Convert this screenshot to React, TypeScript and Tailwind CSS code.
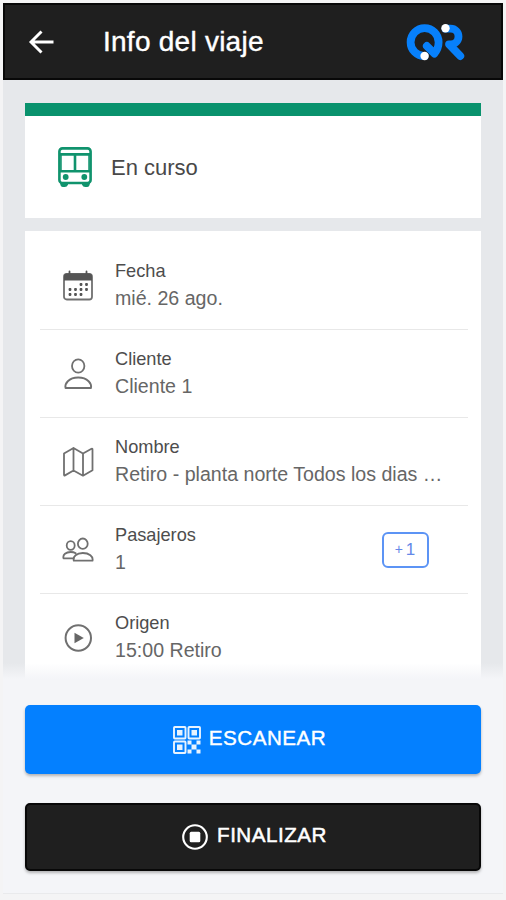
import type { ReactNode } from "react";

const line = {
  fill: "none",
  stroke: "#707070",
  strokeWidth: 1.8,
  strokeLinecap: "round",
  strokeLinejoin: "round",
} as const;

function BackIcon() {
  return (
    <svg className="h-6 w-7" viewBox="0 0 28 24" fill="none" stroke="#fff" strokeWidth="2.9">
      <path d="M14.5 1.5 4 12l10.5 10.5M4 12h22.5" />
    </svg>
  );
}

function Logo() {
  return (
    <svg
      className="h-10 w-[62px]"
      viewBox="0 0 62 40"
      fill="none"
      stroke="#0780fb"
      strokeWidth="7.8"
      strokeLinecap="round"
      strokeLinejoin="round"
    >
      <path d="M18.600 34.200A14 14 0 1 1 32.600 20.300C32.600 25 30.800 28.700 28.300 31.600L20.800 24" />
      <path d="M39.500 6.700h5.200a7.800 7.800 0 0 1 0 15.600H43L54.300 34" />
      <circle cx="18.600" cy="34" r="4.200" fill="#fff" stroke="none" />
      <circle cx="39.500" cy="6.200" r="4.200" fill="#fff" stroke="none" />
    </svg>
  );
}

function BusIcon() {
  return (
    <svg className="h-[40px] w-[34px]" viewBox="0 0 34 40" fill="none" stroke="#10936d" strokeWidth="2.6">
      <rect x="1.4" y="1.4" width="31.2" height="34.6" rx="3" />
      <path d="M1.4 7.4h31.2M17 7.4V24M1.4 24.3h31.2" />
      <path d="M3 6v19M31 6v19" strokeWidth="1.5" />
      <circle cx="7.7" cy="30" r="2.9" fill="#10936d" stroke="none" />
      <circle cx="26.3" cy="30" r="2.9" fill="#10936d" stroke="none" />
      <path d="M2 35h8v2.800q-1 2.200-3.200 2.200H5q-3 0-3-5zM24 35h8q0 5-3 5h-1.800q-2.200 0-3.200-2.200z" fill="#10936d" stroke="none" />
    </svg>
  );
}

const dots = [
  [19, 14.5], [24.5, 14.5],
  [8, 19.5], [13.5, 19.5], [19, 19.5], [24.5, 19.5],
  [8, 24.5], [13.5, 24.5], [19, 24.5],
];

function CalendarIcon() {
  return (
    <svg className="size-8" viewBox="0 0 32 32">
      <rect x="2" y="4" width="28" height="25.5" rx="2.8" {...line} />
      <path d="M2 10.5V6q0-2.5 3-2.5h22q3 0 3 2.5v4.5z" fill="#555" />
      <path d="M7.5 1.5v4M24.5 1.5v4" {...line} stroke="#555" />
      {dots.map(([x, y]) => (
        <rect key={`${x}-${y}`} x={x - 1.4} y={y - 1.4} width="2.8" height="2.8" rx=".8" fill="#555" />
      ))}
    </svg>
  );
}

function PersonIcon() {
  return (
    <svg className="size-8" viewBox="0 0 32 32" {...line}>
      <ellipse cx="16.2" cy="8" rx="6.200" ry="6.700" />
      <path d="M3.500 30C2.500 26 6.500 19.500 16.200 19.500S30 26 29 30Z" />
    </svg>
  );
}

function MapIcon() {
  return (
    <svg className="size-8" viewBox="0 0 32 32" {...line}>
      <path d="M2 7.500 11.500 2 21 7.500l8.500-4.700q1-.4 1 .7v20.700L21 29.700 11.500 24.500 3 29.400q-1 .4-1-.7zM11.500 2v22.500M21 7.500v22.200" />
    </svg>
  );
}

function PeopleIcon() {
  return (
    <svg className="size-8" viewBox="0 0 32 32" {...line}>
      <ellipse cx="20.800" cy="9.700" rx="4.900" ry="5.200" />
      <ellipse cx="8.700" cy="11.500" rx="4" ry="4.300" />
      <path d="M11.800 26.700C10.800 22.500 14.500 19 20.800 19S31.500 22.500 30.500 26.700Z" />
      <path d="M11.500 24.300H1.500C.5 20.500 4 18 8.700 18q3 0 5 1.300" />
    </svg>
  );
}

function PlayIcon() {
  return (
    <svg className="size-8" viewBox="0 0 32 32">
      <circle cx="16.300" cy="16" r="12.700" {...line} strokeWidth="2" />
      <path d="M12.500 10.700v10.600l9.300-5.300z" fill="#666" />
    </svg>
  );
}

function QrIcon() {
  const eyes = [[1, 1], [15.500, 1], [1, 15.500]];
  return (
    <svg className="size-7" viewBox="0 0 28 28" fill="#e8f3ff">
      {eyes.map(([x, y]) => (
        <g key={`${x}-${y}`}>
          <rect x={x} y={y} width="11.500" height="11.500" rx=".8" fill="none" stroke="#e8f3ff" strokeWidth="1.900" />
          <rect x={x + 3} y={y + 3} width="5.500" height="5.500" />
        </g>
      ))}
      <path d="M14.500 14.500h4v4h-4zM23.500 14.500h4v4h-4zM18.500 18.500h5v5h-5zM14.500 23.500h4v4h-4zM23.500 23.500h4v4h-4z" />
    </svg>
  );
}

function StopIcon() {
  return (
    <svg className="size-7" viewBox="0 0 28 28">
      <circle cx="14" cy="14" r="11.800" fill="none" stroke="#fff" strokeWidth="2.100" />
      <rect x="8.700" y="8.700" width="10.600" height="10.600" rx="1.500" fill="#fff" />
    </svg>
  );
}

type RowProps = { icon: ReactNode; label: string; value: string; action?: ReactNode };

function Row({ icon, label, value, action }: RowProps) {
  return (
    <div className="mr-[13px] ml-[15px] flex h-[88px] shrink-0 items-center border-b border-[#e8e8e8] pl-[22px]">
      {icon}
      <div className="ml-[21px] w-[330px] shrink-0 pb-[3px] whitespace-nowrap">
        <div className="text-[18.2px] leading-7 text-[#4d4d4d]">{label}</div>
        <div className="text-[19.6px] leading-[27px] text-[#666]">{value}</div>
      </div>
      {action}
    </div>
  );
}

export default function App() {
  return (
    <div className="h-[900px] w-[506px] overflow-hidden bg-[#f4f4f5] px-[3px] pt-[3px] font-['Liberation_Sans',Arial,sans-serif]">
      <div className="flex h-[891px] w-[500px] flex-col overflow-hidden border-b border-[#e9eaec] bg-[#e6e8eb]">
        <header className="flex h-[77px] shrink-0 items-center border-2 border-[#080808] bg-[#1f1f1f] pl-[22px]">
          <BackIcon />
          <h1 className="ml-[48px] w-[303px] text-[28px] leading-9 tracking-[0.25px] text-white [-webkit-text-stroke:0.4px_white]">
            Info del viaje
          </h1>
          <Logo />
        </header>

        <main className="relative flex h-[599px] shrink-0 flex-col gap-[13px] overflow-hidden pt-[23px] pr-[22px] pl-[22px]">
          <section className="flex h-[115px] shrink-0 items-center border-t-[13px] border-[#09926d] bg-white pl-[33px]">
            <BusIcon />
            <span className="ml-[19px] text-[22px] text-[#484848]">En curso</span>
          </section>
          <section className="flex h-[470px] shrink-0 flex-col bg-white pt-[11px]">
            <Row icon={<CalendarIcon />} label="Fecha" value="mié. 26 ago." />
            <Row icon={<PersonIcon />} label="Cliente" value="Cliente 1" />
            <Row icon={<MapIcon />} label="Nombre" value="Retiro - planta norte Todos los dias …" />
            <Row
              icon={<PeopleIcon />}
              label="Pasajeros"
              value="1"
              action={
                <button className="-ml-[63px] flex h-9 w-[47px] shrink-0 items-center justify-center gap-[3px] rounded-[6px] border-2 border-[#5c94f5] pr-px text-[17px] text-[#6488e8]">
                  <span className="text-[14px]">+</span>
                  <span>1</span>
                </button>
              }
            />
            <Row icon={<PlayIcon />} label="Origen" value="15:00 Retiro" />
          </section>
          <div className="absolute inset-x-0 bottom-0 h-4 bg-linear-to-b from-[#f4f5f800] to-[#f4f5f8]" />
        </main>

        <footer className="flex grow flex-col gap-[29px] bg-[#f4f5f8] px-[22px] pt-[26px] text-[20.6px] tracking-[0.025em] text-white">
          <button className="flex h-[69px] items-center justify-center gap-[8px] rounded-[5px] bg-[#0480ff] pr-[7px] shadow-[0_2px_3px_#00000045]">
            <QrIcon />
            <span className="pb-[2px] [-webkit-text-stroke:0.4px_white]">ESCANEAR</span>
          </button>
          <button className="flex h-[68px] items-center justify-center gap-[8px] rounded-[5px] border-2 border-[#080808] bg-[#1f1f1f] pl-[2px] shadow-[0_2px_3px_#00000045]">
            <StopIcon />
            <span className="pb-[3px] [-webkit-text-stroke:0.5px_white]">FINALIZAR</span>
          </button>
        </footer>
      </div>
    </div>
  );
}
